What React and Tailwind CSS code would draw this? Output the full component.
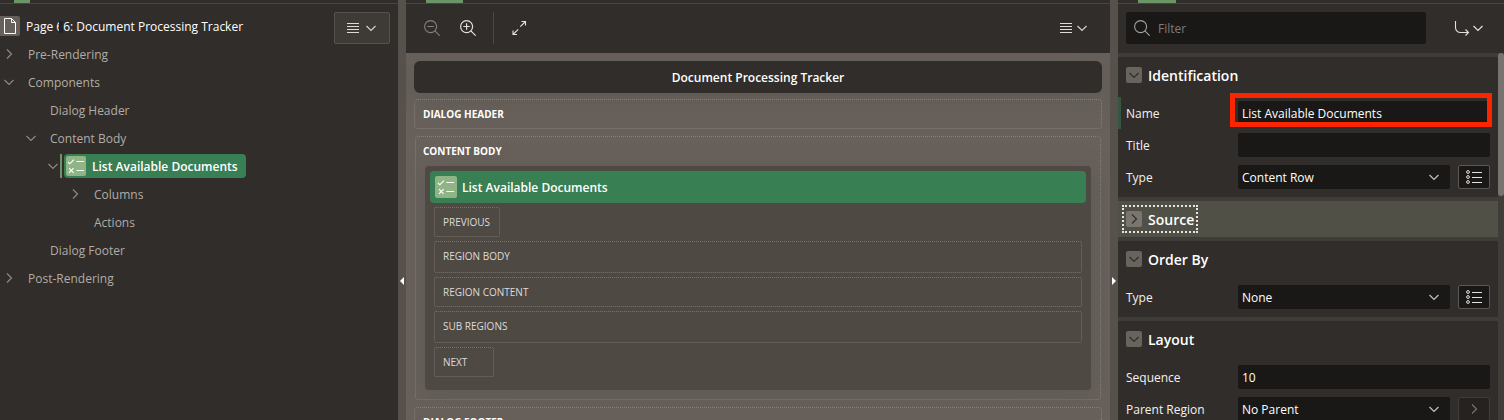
import React from "react";

function Chevron({ dir = "down", className = "" }) {
  return (
    <svg viewBox="0 0 12 12" className={"h-3 w-3 shrink-0 " + className} fill="none" stroke="currentColor" strokeWidth="1.2" aria-hidden="true">
      <path d={dir === "down" ? "M1.5 4l4.5 4.5L10.5 4" : "M4 1.5L8.5 6 4 10.5"} />
    </svg>
  );
}

function MenuLines() {
  return (
    <svg viewBox="0 0 12 12" className="h-3 w-3" fill="none" stroke="#dddbd8" strokeWidth="1" aria-hidden="true">
      <path d="M0 1.5h12M0 4.5h12M0 7.5h12M0 10.5h12" />
    </svg>
  );
}

function RegionIcon({ className = "" }) {
  return (
    <span className={"flex shrink-0 items-center justify-center rounded-xs bg-[#8fb586] " + className}>
      <svg viewBox="0 0 20 20" className="h-5 w-5" fill="none" stroke="#fff" strokeWidth="1.1" aria-hidden="true">
        <path d="M2 6l1.8 1.8L8 3.6M10.5 5.5H18M10.5 14.5H18M3 12.2l4.6 4.6M7.6 12.2L3 16.8" />
      </svg>
    </span>
  );
}

function TreeToggle({ dir }) {
  return (
    <button type="button" aria-label="Toggle node" className="flex h-7 w-3 items-center text-[#8d8984]">
      <Chevron dir={dir} />
    </button>
  );
}

function TreeRow({ indent, dir, label }) {
  return (
    <li className={"flex h-7 items-center " + indent}>
      <span className="flex w-[25px] shrink-0">{dir && <TreeToggle dir={dir} />}</span>
      <a href="#node" className="text-[#b0aca8]">{label}</a>
    </li>
  );
}

function TopTab({ className }) {
  return (
    <div className="h-1 shrink-0 border-b border-[#494542]">
      <div className={"h-[3px] bg-[#6b9567] " + className} />
    </div>
  );
}

function Splitter({ dir }) {
  return (
    <div className="flex w-2 shrink-0 flex-col bg-[#57514c] pt-[277px]">
      <svg viewBox="0 0 8 8" className="h-2 w-2" fill="#fff" aria-hidden="true">
        <path d={dir === "left" ? "M6 0v8L2 4z" : "M2 0v8l4-4z"} />
      </svg>
    </div>
  );
}

function TreePanel() {
  return (
    <aside className="flex w-[398px] shrink-0 flex-col">
      <TopTab className="ml-[14px] w-4" />
      <div className="flex items-start pt-2 pr-2">
        <ul className="flex-1">
          <li className="flex h-7 items-center gap-1.5">
            <span className="flex h-5 w-5 items-center justify-center rounded-r-xs bg-[#665f5a]">
              <svg viewBox="0 0 12 16" className="h-4 w-3" fill="none" stroke="#fff" strokeWidth="1" aria-hidden="true">
                <path d="M.5.5h7l4 4v11H.5zM7.5.5v4h4" />
              </svg>
            </span>
            <span className="text-white">
              Page <span className="relative">6<span className="absolute top-[3px] right-0 h-3 w-1 bg-[#202323]" /></span>6: Document Processing Tracker
            </span>
          </li>
          <TreeRow indent="pl-[3px]" dir="right" label="Pre-Rendering" />
          <TreeRow indent="pl-[3px]" dir="down" label="Components" />
          <TreeRow indent="pl-[25px]" label="Dialog Header" />
          <TreeRow indent="pl-[25px]" dir="down" label="Content Body" />
          <li className="flex h-7 items-center pl-[47px]">
            <TreeToggle dir="down" />
            <span className="mr-0.5 ml-px h-6 w-0.5 bg-[#6b9567]" />
            <a href="#node" className="flex h-6 items-center gap-1.5 rounded bg-[#397f54] pr-2 pl-0.5 font-semibold text-white">
              <RegionIcon className="h-5 w-5" />
              List Available Documents
            </a>
          </li>
          <TreeRow indent="pl-[69px]" dir="right" label="Columns" />
          <TreeRow indent="pl-[69px]" label="Actions" />
          <TreeRow indent="pl-[25px]" label="Dialog Footer" />
          <TreeRow indent="pl-[3px]" dir="right" label="Post-Rendering" />
        </ul>
        <button type="button" aria-label="Tree menu" className="flex h-8 w-14 items-center justify-center gap-1.5 rounded-xs border border-[#56524d] bg-[#3e3a36] text-[#d3d0cd]">
          <MenuLines />
          <Chevron />
        </button>
      </div>
    </aside>
  );
}

function Slot({ className, label }) {
  return (
    <div className={"flex items-center rounded-xs border border-dotted border-[#77726d] px-2 text-[10px] text-[#dedbd8] " + className}>
      {label}
    </div>
  );
}

function LayoutPanel() {
  return (
    <main className="flex min-w-0 flex-1 flex-col">
      <TopTab className="ml-5 w-[37px]" />
      <div className="flex h-[49px] shrink-0 items-center pr-[22px] pb-px pl-[18px]">
        <button type="button" aria-label="Zoom out" className="mr-5 text-[#85817d]">
          <svg viewBox="0 0 16 16" className="h-4 w-4" fill="none" stroke="currentColor" strokeWidth="1.1" aria-hidden="true">
            <circle cx="6.6" cy="6.6" r="6" />
            <path d="M10.9 10.9l4.8 4.8M3.4 6.5h6.4" />
          </svg>
        </button>
        <button type="button" aria-label="Zoom in" className="text-[#e3e1df]">
          <svg viewBox="0 0 16 16" className="h-4 w-4" fill="none" stroke="currentColor" strokeWidth="1.2" aria-hidden="true">
            <circle cx="6.6" cy="6.6" r="6" />
            <path d="M10.9 10.9l4.8 4.8M3.4 6.5h6.4M6.6 3.3v6.4" />
          </svg>
        </button>
        <span className="mr-[18px] ml-[17px] h-8 w-px bg-[#4c4844]" />
        <button type="button" aria-label="Expand" className="text-[#e3e1df]">
          <svg viewBox="0 0 16 16" className="h-4 w-4" fill="none" stroke="currentColor" strokeWidth="1.1" aria-hidden="true">
            <path d="M9.5 1.5h4v4M13.5 1.5L8.3 6.7M5 14.5H1v-4M1 14.5l5.2-5.2" />
          </svg>
        </button>
        <button type="button" aria-label="Layout menu" className="ml-auto flex items-center gap-1 text-[#d3d0cd]">
          <MenuLines />
          <Chevron />
        </button>
      </div>
      <div className="flex-1 overflow-hidden bg-[#68605b] px-2 pt-2">
        <h1 className="mb-1.5 flex h-8 items-center justify-center rounded-md bg-[#312d2a] font-semibold text-white shadow-[0_6px_28px_2px_#57575180]">
          Document Processing Tracker
        </h1>
        <div className="relative mb-[7px] flex h-[30px] items-center rounded border border-dotted border-[#86807a] px-2 text-[10px] font-bold text-white">
          DIALOG HEADER
        </div>
        <section className="mx-px mb-[7px] rounded border border-dotted border-[#86807a] px-[9px] pb-[9px]">
          <h2 className="-ml-0.5 flex h-[29px] items-center text-[10px] font-bold text-white">CONTENT BODY</h2>
          <div className="rounded bg-[#4f4944] px-[5px] pt-[5px] pb-[13px] shadow-[0_6px_20px_2px_#57575180]">
            <div className="mb-1 flex h-8 items-center gap-[5px] rounded bg-[#397f54] px-[5px] font-semibold text-white">
              <RegionIcon className="h-[22px] w-[22px]" />
              List Available Documents
            </div>
            <div className="flex flex-col gap-1 px-1">
              <Slot className="h-[30px] w-[66px]" label="PREVIOUS" />
              <Slot className="h-8 pb-0.5" label="REGION BODY" />
              <Slot className="h-[30px]" label="REGION CONTENT" />
              <Slot className="h-8 pb-0.5" label="SUB REGIONS" />
              <Slot className="h-[30px] w-[60px]" label="NEXT" />
            </div>
          </div>
        </section>
        <div className="flex h-[30px] items-center rounded border border-dotted border-[#86807a] px-2 text-[10px] font-bold text-white">
          DIALOG FOOTER
        </div>
      </div>
    </main>
  );
}

function ListButton() {
  return (
    <button type="button" aria-label="Pick from list" className="flex h-6 w-8 shrink-0 items-center justify-center rounded-xs border border-[#5c5752] bg-[#1a1816]">
      <svg viewBox="0 0 16 14" className="h-3.5 w-4" fill="none" stroke="#e3e1df" strokeWidth="1" aria-hidden="true">
        <circle cx="2" cy="2" r="1.4" />
        <circle cx="2" cy="7" r="1.4" />
        <circle cx="2" cy="12" r="1.4" />
        <path d="M6 2.5h10M6 7.5h10M6 12.5h10" />
      </svg>
    </button>
  );
}

function Row({ id, label, changed, children }) {
  return (
    <div className={"flex h-8 items-center border-l-[3px] pr-2 pl-[5px] " + (changed ? "border-[#36573f]" : "border-transparent")}>
      <label htmlFor={id} className="w-28 shrink-0 text-[#f3f2f1]">{label}</label>
      {children}
    </div>
  );
}

function TextField({ id, value, highlight }) {
  return (
    <div className="relative flex-1">
      <input id={id} defaultValue={value} className="block h-6 w-full rounded-xs bg-[#1a1816] px-1 text-white outline-none" />
      {highlight && <span className="pointer-events-none absolute -top-2 -right-0.5 -bottom-0.5 -left-2 border-[5px] border-[#fb2500]" />}
    </div>
  );
}

function SelectField({ id, value }) {
  return (
    <div className="relative mr-2 flex-1">
      <select id={id} className="block h-6 w-full appearance-none rounded-xs bg-[#1a1816] px-1 text-white outline-none">
        <option>{value}</option>
      </select>
      <Chevron className="pointer-events-none absolute top-1.5 right-2.5 text-[#c5c2be]" />
    </div>
  );
}

function SectionTitle({ dir = "down", focused, children }) {
  return (
    <h2 className="flex h-9 items-center px-1">
      <button
        type="button"
        className={"flex h-7 items-center gap-1.5 border-2 px-0.5 text-[14px] font-semibold text-white " + (focused ? "border-dotted border-[#e6e6e2]" : "border-transparent")}
      >
        <span className={"flex h-4 w-4 items-center justify-center rounded-xs text-[#312d2a] " + (focused ? "bg-[#7a766f]" : "bg-[#68635c]")}>
          <Chevron dir={dir} />
        </span>
        {children}
      </button>
    </h2>
  );
}

function PropertyPanel() {
  return (
    <aside className="flex w-[386px] shrink-0 flex-col">
      <TopTab className="ml-5 w-[38px]" />
      <div className="flex h-[49px] shrink-0 items-center pr-5 pb-px pl-2">
        <label className="flex h-8 w-[300px] items-center gap-2 rounded-xs bg-[#1a1816] px-2" aria-label="Filter">
          <svg viewBox="0 0 16 16" className="h-4 w-4" fill="none" stroke="#a5a19d" strokeWidth="1.1" aria-hidden="true">
            <circle cx="6.6" cy="6.6" r="6" />
            <path d="M10.9 10.9l4.8 4.8" />
          </svg>
          <input placeholder="Filter" className="min-w-0 flex-1 bg-transparent text-white outline-none placeholder:text-[#7f7c79]" />
        </label>
        <button type="button" aria-label="Go to group" className="ml-auto flex items-center gap-0.5 text-[#e3e1df]">
          <svg viewBox="0 0 16 16" className="h-4 w-4" fill="none" stroke="currentColor" strokeWidth="1.1" aria-hidden="true">
            <path d="M1.5 1v6.5a5 5 0 0 0 5 5h8M11.5 9.5l3 3-3 3" />
          </svg>
          <Chevron />
        </button>
      </div>
      <div className="flex min-h-0 flex-1">
        <div className="flex flex-1 flex-col gap-1 bg-[#403c38] pt-1">
          <section className="bg-[#312d2a] pb-1">
            <SectionTitle>Identification</SectionTitle>
            <div className="pt-1">
              <Row id="name" label="Name" changed><TextField id="name" value="List Available Documents" highlight /></Row>
              <Row id="title" label="Title"><TextField id="title" value="" /></Row>
              <Row id="region-type" label="Type"><SelectField id="region-type" value="Content Row" /><ListButton /></Row>
            </div>
          </section>
          <section className="bg-[#505047]">
            <SectionTitle dir="right" focused>Source</SectionTitle>
          </section>
          <section className="bg-[#312d2a] pb-1">
            <SectionTitle>Order By</SectionTitle>
            <div className="pt-1">
              <Row id="order-type" label="Type"><SelectField id="order-type" value="None" /><ListButton /></Row>
            </div>
          </section>
          <section className="bg-[#312d2a] pb-1">
            <SectionTitle>Layout</SectionTitle>
            <div className="pt-1">
              <Row id="sequence" label="Sequence"><TextField id="sequence" value="10" /></Row>
              <Row id="parent" label="Parent Region">
                <SelectField id="parent" value="No Parent" />
                <button type="button" aria-label="Go to parent" className="flex h-6 w-8 shrink-0 items-center justify-center rounded-xs border border-[#423d39] bg-[#26221f] text-[#77726d]">
                  <Chevron dir="right" />
                </button>
              </Row>
            </div>
          </section>
        </div>
        <div className="w-1.5 shrink-0 bg-[#403c38]">
          <div className="h-[143px] rounded bg-[#77736f]" />
        </div>
      </div>
    </aside>
  );
}

export default function App() {
  return (
    <div className="flex h-screen overflow-hidden bg-[#312d2a] font-['Open_Sans','Noto_Sans',sans-serif] text-[12px] leading-[17px]">
      <TreePanel />
      <Splitter dir="left" />
      <LayoutPanel />
      <Splitter dir="right" />
      <PropertyPanel />
    </div>
  );
}
